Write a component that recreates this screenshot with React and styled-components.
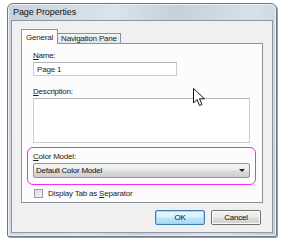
import React from 'react'
import styled, { createGlobalStyle } from 'styled-components'

const Global = createGlobalStyle`
	html, body {
		margin: 0;
		background: #ffffff;
	}
	body {
		font-family: "Liberation Sans", Arial, sans-serif;
		font-size: 8px;
		color: #1e1e1e;
	}
`
const Page = styled.div`
	width: 289px;
	height: 249px;
	padding: 3px 0 0 7px;
	box-sizing: border-box;
	position: relative;
`
const Window = styled.div`
	width: 270px;
	height: 234px;
	box-sizing: border-box;
	border: 1px solid #6e7781;
	border-radius: 6px 6px 2px 2px;
	background: linear-gradient(100deg, #c9d2dc 0%, #dbe3ec 35%, #c6d0db 55%, #d8e0e9 80%, #c3ccd6 100%);
	box-shadow: inset 0 0 0 1px #eef2f6, 1px 1px 0 #9aa0a6;
	display: flex;
	flex-direction: column;
`
const TitleBar = styled.div`
	height: 16px;
	padding-left: 5px;
	display: flex;
	align-items: center;
	font-size: 9px;
	color: #111;
	letter-spacing: -0.1px;
`
const Client = styled.div`
	flex: 1;
	margin: 0 3px 3px 3px;
	background: #f0f0f0;
	border: 1px solid #8f98a2;
	padding: 8px 9px 0 9px;
	display: flex;
	flex-direction: column;
`
const TabStrip = styled.div`
	display: flex;
	align-items: flex-end;
	height: 15px;
	position: relative;
	z-index: 1;
	margin-bottom: -1px;
`
const Tab = styled.div`
	height: ${p => (p.$active ? 15 : 11)}px;
	padding: 0 ${p => (p.$active ? 4 : 3)}px;
	box-sizing: border-box;
	border: 1px solid #8c9299;
	border-bottom: ${p => (p.$active ? 'none' : '1px solid #8c9299')};
	background: ${p => (p.$active ? '#fcfcfc' : 'linear-gradient(#f3f3f3, #e4e4e4)')};
	margin-left: ${p => (p.$active ? 0 : -1)}px;
	display: flex;
	align-items: ${p => (p.$active ? 'flex-start' : 'center')};
	padding-top: ${p => (p.$active ? 3 : 0)}px;
	letter-spacing: -0.2px;
	white-space: nowrap;
	box-shadow: ${p => (p.$active ? 'inset 0 0 0 1px #fff' : 'none')};
`
const Panel = styled.div`
	height: 160px;
	box-sizing: border-box;
	border: 1px solid #8c9299;
	background: #fcfcfc;
	padding: 7px 12px 0 11px;
	display: flex;
	flex-direction: column;
`
const Label = styled.div`
	height: 9px;
	line-height: 9px;
	letter-spacing: -0.2px;
	color: #222;
	margin-bottom: 2px;
	u {
		text-decoration: underline;
	}
`
const TextBox = styled.div`
	width: ${p => p.$w}px;
	height: ${p => p.$h}px;
	box-sizing: border-box;
	border: 1px solid #c9cdd2;
	border-top-color: #b0b5bb;
	background: #ffffff;
	padding: 2px 3px;
	letter-spacing: -0.2px;
	margin-bottom: ${p => p.$mb || 0}px;
`
const Highlight = styled.div`
	margin: 0 -6px 4px -6px;
	padding: 4px 4px 4px 5px;
	border: 1.5px solid #f52cf5;
	border-radius: 6px;
	height: 38px;
	box-sizing: border-box;
	display: flex;
	flex-direction: column;
`
const Select = styled.div`
	width: 217px;
	height: 15px;
	box-sizing: border-box;
	border: 1px solid #8e959c;
	border-radius: 2px;
	background: linear-gradient(#f4f4f4 0%, #ececec 48%, #dcdcdc 52%, #cfcfcf 100%);
	display: flex;
	align-items: center;
	justify-content: space-between;
	padding: 0 4px 0 2px;
	letter-spacing: -0.25px;
	color: #111;
`
const Arrow = styled.span`
	width: 0;
	height: 0;
	border-left: 3px solid transparent;
	border-right: 3px solid transparent;
	border-top: 3px solid #222;
`
const CheckRow = styled.div`
	display: flex;
	align-items: center;
	gap: 5px;
	padding-left: 1px;
	letter-spacing: -0.2px;
`
const CheckBox = styled.span`
	width: 9px;
	height: 9px;
	box-sizing: border-box;
	border: 1px solid #9a9fa5;
	background: linear-gradient(135deg, #d8dadd, #f2f3f4);
`
const Buttons = styled.div`
	display: flex;
	justify-content: flex-end;
	gap: 6px;
	margin-top: 7px;
	padding-right: 2px;
`
const Button = styled.div`
	width: 50px;
	height: 15px;
	box-sizing: border-box;
	border: 1px solid ${p => (p.$default ? '#3c7fb1' : '#707070')};
	border-radius: 2px;
	background: ${p =>
		p.$default
			? 'linear-gradient(#eaf6fd 0%, #d9f0fc 48%, #bee6fd 52%, #a7d9f5 100%)'
			: 'linear-gradient(#f2f2f2 0%, #ebebeb 48%, #dddddd 52%, #cfcfcf 100%)'};
	box-shadow: inset 0 0 0 1px ${p => (p.$default ? '#9ed6f7' : '#fafafa')};
	display: flex;
	align-items: center;
	justify-content: center;
	letter-spacing: -0.2px;
	color: #111;
`
const Cursor = styled.svg`
	position: absolute;
	left: 193px;
	top: 88px;
`

const App = () => {
	return (
		<Page>
			<Global />
			<Window>
				<TitleBar>Page Properties</TitleBar>
				<Client>
					<TabStrip>
						<Tab $active>General</Tab>
						<Tab>Navigation Pane</Tab>
					</TabStrip>
					<Panel>
						<Label><u>N</u>ame:</Label>
						<TextBox $w={144} $h={14} $mb={11}>Page 1</TextBox>
						<Label><u>D</u>escription:</Label>
						<TextBox $w={217} $h={45} $mb={4} />
						<Highlight>
							<Label><u>C</u>olor Model:</Label>
							<Select>
								Default Color Model
								<Arrow />
							</Select>
						</Highlight>
						<CheckRow>
							<CheckBox />
							<span>Display Tab as <u>S</u>eparator</span>
						</CheckRow>
					</Panel>
					<Buttons>
						<Button $default>OK</Button>
						<Button>Cancel</Button>
					</Buttons>
				</Client>
			</Window>
			<Cursor width="13" height="19" viewBox="0 0 13 19">
				<path d="M0.5 0.5 L0.5 15 L4 11.5 L6.5 17.5 L9 16.5 L6.5 10.8 L11.5 10.8 Z" fill="#fff" stroke="#111" strokeWidth="1" strokeLinejoin="round" />
			</Cursor>
		</Page>
	)
}

export default App
